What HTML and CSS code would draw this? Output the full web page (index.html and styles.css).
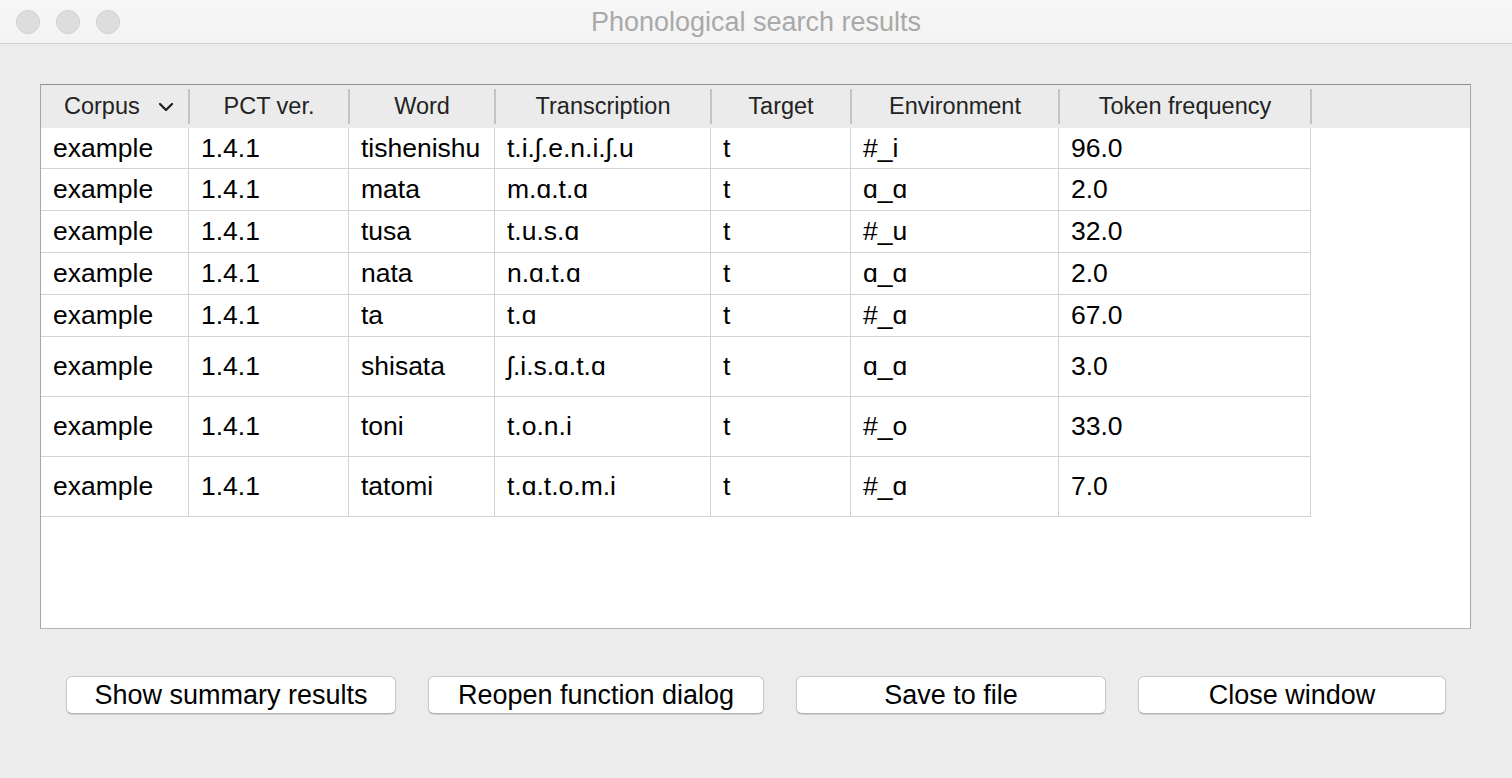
FILE: index.html
```html
<!DOCTYPE html>
<html>
<head>
<meta charset="utf-8">
<title>Phonological search results</title>
<link rel="stylesheet" href="styles.css">
</head>
<body>
<div class="window">
  <div class="titlebar">
    <div class="lights">
      <span class="light"></span><span class="light"></span><span class="light"></span>
    </div>
    <div class="title">Phonological search results</div>
  </div>
  <div class="content">
    <div class="frame">
      <div class="row head">
        <div class="th corpus"><span>Corpus</span><svg class="chev" width="16" height="10" viewBox="0 0 16 10"><path d="M2 2 L8 8 L14 2" fill="none" stroke="#1e1e1e" stroke-width="2.2" stroke-linecap="round" stroke-linejoin="round"/></svg></div>
        <div class="th">PCT ver.</div>
        <div class="th">Word</div>
        <div class="th">Transcription</div>
        <div class="th">Target</div>
        <div class="th">Environment</div>
        <div class="th">Token frequency</div>
        <div class="th filler"></div>
      </div>
      <div class="row r1"><div class="td">example</div><div class="td">1.4.1</div><div class="td">tishenishu</div><div class="td">t.i.ʃ.e.n.i.ʃ.u</div><div class="td">t</div><div class="td">#_i</div><div class="td">96.0</div><div class="tf"></div></div>
      <div class="row r2"><div class="td">example</div><div class="td">1.4.1</div><div class="td">mata</div><div class="td">m.ɑ.t.ɑ</div><div class="td">t</div><div class="td">ɑ_ɑ</div><div class="td">2.0</div><div class="tf"></div></div>
      <div class="row r2"><div class="td">example</div><div class="td">1.4.1</div><div class="td">tusa</div><div class="td">t.u.s.ɑ</div><div class="td">t</div><div class="td">#_u</div><div class="td">32.0</div><div class="tf"></div></div>
      <div class="row r2"><div class="td">example</div><div class="td">1.4.1</div><div class="td">nata</div><div class="td">n.ɑ.t.ɑ</div><div class="td">t</div><div class="td">ɑ_ɑ</div><div class="td">2.0</div><div class="tf"></div></div>
      <div class="row r2"><div class="td">example</div><div class="td">1.4.1</div><div class="td">ta</div><div class="td">t.ɑ</div><div class="td">t</div><div class="td">#_ɑ</div><div class="td">67.0</div><div class="tf"></div></div>
      <div class="row r3"><div class="td">example</div><div class="td">1.4.1</div><div class="td">shisata</div><div class="td">ʃ.i.s.ɑ.t.ɑ</div><div class="td">t</div><div class="td">ɑ_ɑ</div><div class="td">3.0</div><div class="tf"></div></div>
      <div class="row r3"><div class="td">example</div><div class="td">1.4.1</div><div class="td">toni</div><div class="td">t.o.n.i</div><div class="td">t</div><div class="td">#_o</div><div class="td">33.0</div><div class="tf"></div></div>
      <div class="row r3"><div class="td">example</div><div class="td">1.4.1</div><div class="td">tatomi</div><div class="td">t.ɑ.t.o.m.i</div><div class="td">t</div><div class="td">#_ɑ</div><div class="td">7.0</div><div class="tf"></div></div>
    </div>
    <div class="buttons">
      <button class="btn b1">Show summary results</button>
      <button class="btn b2">Reopen function dialog</button>
      <button class="btn b3">Save to file</button>
      <button class="btn b4">Close window</button>
    </div>
  </div>
</div>
</body>
</html>
```
FILE: styles.css
```css
html, body {
  margin: 0;
  padding: 0;
}
body {
  background: #ececec;
  font-family: "Liberation Sans", "DejaVu Sans", Arial, sans-serif;
  width: 1512px;
  height: 778px;
  overflow: hidden;
}
.window {
  display: flex;
  flex-direction: column;
  height: 778px;
}
.titlebar {
  height: 43px;
  border-bottom: 1px solid #d2d2d2;
  background: linear-gradient(#f7f7f7, #f3f3f3);
  display: flex;
  align-items: center;
  position: relative;
}
.lights {
  display: flex;
  gap: 16px;
  padding-left: 16px;
  padding-top: 1px;
}
.light {
  width: 22px;
  height: 22px;
  border-radius: 50%;
  background: #dddddd;
  border: 1px solid #d1d1d1;
}
.title {
  position: absolute;
  left: 0;
  right: 0;
  top: 0;
  height: 43px;
  line-height: 45px;
  text-align: center;
  font-size: 27px;
  color: #a9a9a9;
}
.content {
  flex: 1;
  display: flex;
  flex-direction: column;
}
.frame {
  margin: 40px 41px 0 40px;
  height: 543px;
  box-sizing: content-box;
  background: #ffffff;
  border-top: 1px solid #8f8f8f;
  border-left: 1px solid #a6a6a6;
  border-right: 1px solid #a6a6a6;
  border-bottom: 1px solid #b6b6b6;
}
.row {
  display: grid;
  grid-template-columns: 148px 160px 146px 216px 140px 208px 252px 1fr;
}
.head {
  height: 43px;
  background: #ebebeb;
}
.th {
  position: relative;
  display: flex;
  align-items: center;
  justify-content: center;
  font-size: 23.5px;
  color: #232323;
  padding-bottom: 1px;
}
.th::after {
  content: "";
  position: absolute;
  right: -1px;
  top: 4px;
  bottom: 4px;
  width: 2px;
  background: #c3c3c3;
}
.th.filler::after {
  display: none;
}
.th.corpus {
  justify-content: flex-start;
  padding-left: 23px;
}
.chev {
  margin-left: 18px;
  margin-top: 1px;
}
.td {
  box-sizing: border-box;
  border-right: 1px solid #d3d3d3;
  border-bottom: 1px solid #d3d3d3;
  display: flex;
  align-items: center;
  padding-left: 12px;
  font-size: 26.5px;
  color: #000000;
  white-space: nowrap;
}
.r1 { height: 41px; }
.r2 { height: 42px; }
.r3 { height: 60px; }
.buttons {
  display: flex;
  gap: 32px;
  padding: 0 66px;
  margin-top: 47px;
}
.btn {
  height: 38px;
  box-sizing: border-box;
  background: #ffffff;
  border: 1px solid #c9c9c9;
  border-bottom-color: #b0b0b0;
  border-radius: 6px;
  box-shadow: 0 1px 1px rgba(0, 0, 0, 0.12);
  font-family: "Liberation Sans", Arial, sans-serif;
  font-size: 27px;
  color: #000000;
  padding: 0;
  line-height: 36px;
  text-align: center;
}
.b1 { width: 330px; }
.b2 { width: 336px; }
.b3 { width: 310px; }
.b4 { width: 308px; }
```
